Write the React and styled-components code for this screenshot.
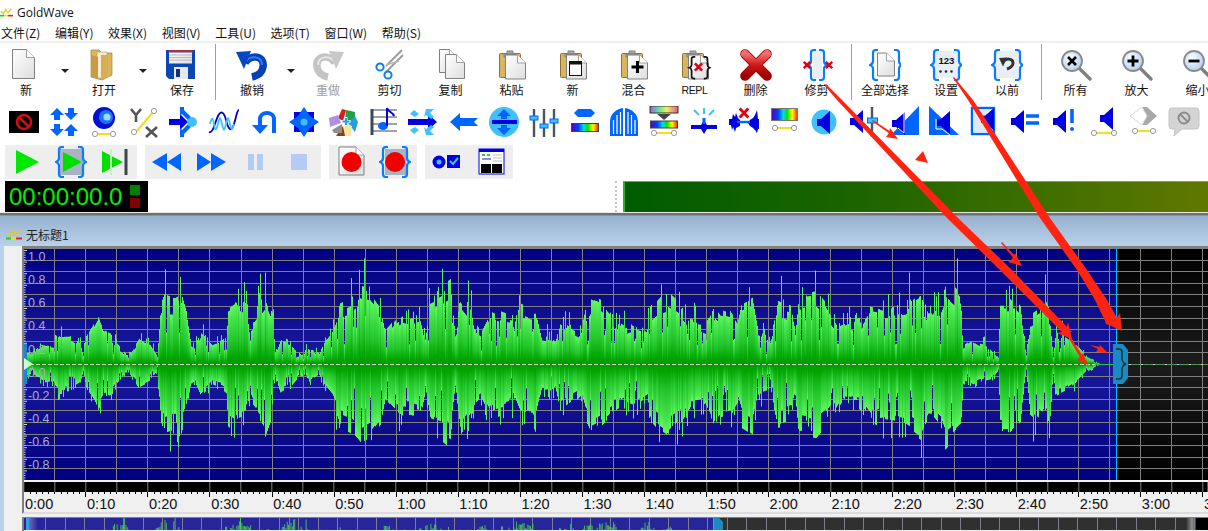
import React from 'react'
import styled, { createGlobalStyle } from 'styled-components'

const GlobalStyle = createGlobalStyle`
  html, body { margin: 0; padding: 0; background: #fff; }
  body { font-family: "Noto Sans CJK SC", "Liberation Sans", sans-serif; }
`

const Page = styled.div`
  position: relative;
  width: 1208px;
  height: 531px;
  overflow: hidden;
  background: #fff;
  display: flex;
  flex-direction: column;
  color: #111;
`
const TitleBar = styled.div`
  height: 24px;
  display: flex;
  align-items: center;
  gap: 4px;
  font: 12px "Open Sans", "Liberation Sans", sans-serif;
`
const MenuBar = styled.div`
  height: 17px;
  display: flex;
  gap: 14.6px;
  padding-left: 1px;
  align-items: center;
  border-bottom: 2px solid #f0f0f0;
  font-size: 12px;
  line-height: 17px;
`
const MainToolbar = styled.div`
  height: 62px;
  display: flex;
  align-items: flex-start;
  padding-top: 1px;
  box-sizing: border-box;
  flex: none;
`
const ToolButton = styled.div`
  width: ${p => p.$w || 61}px;
  margin-right: ${p => p.$mr || 0}px;
  flex: none;
  display: flex;
  flex-direction: column;
  align-items: center;
  padding-top: 5px;
  color: ${p => (p.$off ? '#a0a0a0' : '#111')};
  font-size: 12px;
  line-height: 16px;
  svg { width: 32px; height: 32px; display: block; margin-bottom: 1px; }
`
const SmallLabel = styled.span`
  font: 10.5px/16px "Liberation Sans", sans-serif;
  letter-spacing: -0.3px;
`
const DropArrow = styled.div`
  width: 26px;
  flex: none;
  display: flex;
  justify-content: center;
  padding-top: 25px;
  &::before {
    content: '';
    border: 4px solid transparent;
    border-top: 4px solid #222;
  }
`
const Divider = styled.div`
  width: ${p => p.$w}px;
  flex: none;
  height: 56px;
  box-sizing: border-box;
  padding-left: ${p => p.$at}px;
  &::before {
    content: '';
    display: block;
    width: 1px;
    height: 56px;
    background: #a0a0a0;
  }
`
const IconRow = styled.div`
  height: 40px;
  flex: none;
  display: flex;
  padding-left: 4px;
  align-items: flex-start;
  padding-top: 1px;
  box-sizing: border-box;
`
const IconSlot = styled.div`
  width: 40px;
  flex: none;
  display: flex;
  justify-content: center;
  svg { width: 32px; height: 32px; display: block; }
`
const TransportRow = styled.div`
  height: 34px;
  margin-bottom: 2px;
  flex: none;
  display: flex;
  gap: 8px;
  padding-left: 5px;
`
const TransportGroup = styled.div`
  display: flex;
  background: #eeeeee;
`
const TransportSlot = styled.div`
  width: 44px;
  display: flex;
  align-items: center;
  justify-content: center;
  svg { width: 32px; height: 32px; display: block; }
`
const StatusRow = styled.div`
  height: 31px;
  flex: none;
  display: flex;
  padding-left: 5px;
`
const TimerBox = styled.div`
  width: 143px;
  height: 31px;
  background: #000;
  display: flex;
  align-items: center;
  box-sizing: border-box;
  padding-left: 4px;
  gap: 6px;
`
const TimerText = styled.span`
  font: 24px/31px "Liberation Sans", sans-serif;
  color: #00f000;
  width: 115px;
`
const Leds = styled.div`
  display: flex;
  flex-direction: column;
  gap: 3px;
`
const Led = styled.div`
  width: 10px;
  height: 10px;
  background: ${p => p.$c};
`
const Grip = styled.div`
  margin-left: auto;
  width: 2px;
  margin-right: 4px;
  border-left: 2px dotted #c4c4c4;
`
const Meter = styled.div`
  width: 585px;
  box-sizing: border-box;
  border-top: 1px solid #909090;
  border-left: 2px solid #30b030;
  background: linear-gradient(90deg, #005c00, #1c6400 40%, #607800);
`
const WindowRule = styled.div`
  height: 4px;
  flex: none;
  background: linear-gradient(#e8e8e8 0 1px, #707070 1px 3px, #909090 3px);
`
const DocTitle = styled.div`
  height: 30px;
  flex: none;
  display: flex;
  align-items: center;
  gap: 4px;
  padding: 6px 0 0 6px;
  box-sizing: border-box;
  background: linear-gradient(#97b1ce, #b9d1ea);
  font-size: 12px;
  color: #222;
`
const Workspace = styled.div`
  flex: 1;
  display: flex;
  min-height: 0;
`
const BlueEdge = styled.div`
  width: 4px;
  flex: none;
  background: #b9d1ea;
`
const ClientArea = styled.div`
  flex: 1;
  background: #f0f0f0;
  padding-left: 18px;
  min-width: 0;
  display: flex;
  flex-direction: column;
`
const DocPane = styled.div`
  flex: none;
  height: 268px;
  box-sizing: border-box;
  border-left: 2px solid #808080;
  border-top: 2px solid #808080;
  border-bottom: 2px solid #dcdcdc;
  display: flex;
  flex-direction: column;
`
const WaveCanvas = styled.div`
  position: relative;
  height: 232px;
  flex: none;
  svg { display: block; }
`
const AxisLabels = styled.div`
  position: absolute;
  left: 4px;
  top: -2px;
  display: flex;
  flex-direction: column;
  font: 12.5px/23.15px "Liberation Sans", sans-serif;
  color: #a9a9c6;
`
const RulerEdge = styled.div`
  height: 2px;
  flex: none;
  background: #f4f4f4;
`
const RulerBand = styled.div`
  height: 10px;
  flex: none;
  background: repeating-linear-gradient(90deg, #808080 0 1px, #000 1px 31.03px);
  background-position: -0.7px 0;
`
const RulerTicks = styled.div`
  height: 5px;
  flex: none;
  background-image:
    repeating-linear-gradient(90deg, #000 0 1px, transparent 1px 62.05px),
    repeating-linear-gradient(90deg, #000 0 1px, transparent 1px 6.205px);
  background-size: 100% 5px, 100% 2px;
  background-repeat: no-repeat;
  background-position: -0.7px 0, -0.7px 0;
`
const RulerLabels = styled.div`
  height: 15px;
  flex: none;
  display: flex;
  font: 14.5px/15px "Liberation Sans", sans-serif;
  color: #111;
`
const RulerLabel = styled.span`
  width: 62.05px;
  flex: none;
  padding-left: 1px;
  box-sizing: border-box;
`
const Overview = styled.div`
  margin-top: 3px;
  flex: 1;
  border-top: 1px solid #808080;
  border-left: 2px solid #808080;
  overflow: hidden;
  svg { display: block; }
`
const Annotations = styled.svg`
  position: absolute;
  left: 0;
  top: 0;
  width: 1208px;
  height: 531px;
  pointer-events: none;
`
const SharedDefs = styled.svg`
  position: absolute;
  width: 0;
  height: 0;
`

/* ---------- small drawing parts ---------- */

const Sheet = ({ x = 6, y = 1, w = 22, h = 29 }) => (
  <g>
    <path d={`M${x} ${y}h${w - 8}l8 8V${y + h}H${x}Z`} fill="url(#sheet)" stroke="#808080" />
    <path d={`M${x + w - 8} ${y}v8h8`} fill="#fff" stroke="#a0a0a0" />
  </g>
)
const Clip = () => (
  <g>
    <rect x="3.5" y="4.5" width="21" height="24" rx="1" fill="#d8b562" stroke="#8f7136" />
    <path d="M8 5h12v3H8zM11 5V2h6v3z" fill="#a9a9a9" stroke="#808080" />
  </g>
)
const Brace = ({ x, flip, stroke = '#0a7cff', w = 2.2 }) => (
  <path
    transform={flip ? `translate(${x * 2} 0) scale(-1 1)` : undefined}
    d={`M${x + 5} 1h-2q-3 0-3 3v8q0 3-3 4q3 1 3 4v8q0 3 3 3h2`}
    fill="none"
    stroke={stroke}
    strokeWidth={w}
  />
)
const Cross = ({ x, y, s = 4, w = 2.4 }) => (
  <path d={`M${x - s} ${y - s}L${x + s} ${y + s}M${x + s} ${y - s}L${x - s} ${y + s}`} stroke="#e00010" strokeWidth={w} />
)
const Lens = ({ children }) => (
  <g>
    <path d="M19 19L30 30" stroke="#808080" strokeWidth="3.4" strokeLinecap="round" />
    <circle cx="12" cy="12" r="10" fill="url(#lens)" stroke="#8a8a8a" strokeWidth="1.8" />
    {children}
  </g>
)
const Speaker = ({ x = 0, y = 0, c = '#0000e0' }) => (
  <path transform={`translate(${x} ${y})`} d="M0 8h4l9-8v23l-9-8H0z" fill={c} />
)
const Handles = ({ x1, x2, y }) => (
  <g>
    <path d={`M${x1} ${y}H${x2}`} stroke="#f0e020" strokeWidth="2" />
    <circle cx={x1} cy={y} r="2.6" fill="#fff" stroke="#999" />
    <circle cx={x2} cy={y} r="2.6" fill="#fff" stroke="#999" />
  </g>
)
const Svg = ({ children }) => <svg viewBox="0 0 32 32">{children}</svg>

/* ---------- main toolbar icons ---------- */

const icons = {
  newDoc: <Svg><Sheet x={2.5} y={0.5} w={22} h={29} /></Svg>,
  open: (
    <Svg>
      <path d="M3 1h8l3 3h10v22L14 31 3 28z" fill="#dcb45c" stroke="#a0813c" strokeWidth=".7" />
      <path d="M9 3h10v20l-6 6H9z" fill="#f4ecd8" stroke="#b59a5a" strokeWidth=".6" />
      <path d="M13 6h6v22l-6 2z" fill="#d8ae52" />
      <path d="M3 6l7 2v22l-7-3z" fill="#c89a42" />
    </Svg>
  ),
  save: (
    <Svg>
      <path d="M0 1h29v29H3l-3-3z" fill="#0a46b4" />
      <rect x="2.5" y="1" width="24" height="2.5" fill="#a8324a" />
      <path d="M3 3.5h23v11H3z" fill="url(#sheet)" />
      <path d="M3 6h23M3 8.5h23M3 11h23" stroke="#b8b8c0" />
      <rect x="8" y="18" width="14" height="12" fill="#e8e8e8" />
      <rect x="10" y="20" width="4" height="8" fill="#123070" />
    </Svg>
  ),
  undo: (
    <Svg>
      <path d="M9 14C14 5 29 6 27 18c-1 6-6 9-11 10" fill="none" stroke="#0440b8" strokeWidth="7.5" />
      <path d="M10 12C15 6 26 7 26 16" fill="none" stroke="#2f7ef0" strokeWidth="2" />
      <path d="M0 3l15-1-7 18z" fill="#0648c4" />
    </Svg>
  ),
  redo: (
    <Svg>
      <g transform="translate(32 0) scale(-1 1)">
        <path d="M9 14C14 5 29 6 27 18c-1 6-6 9-11 10" fill="none" stroke="#c4c4c4" strokeWidth="7.5" />
        <path d="M10 12C15 6 26 7 26 16" fill="none" stroke="#e6e6e6" strokeWidth="2" />
        <path d="M0 3l15-1-7 18z" fill="#c8c8c8" />
      </g>
    </Svg>
  ),
  cut: (
    <Svg>
      <path d="M12 17L28 1M12 23L29 6" stroke="#9a9a9a" strokeWidth="1.8" />
      <path d="M12 16L25 12" stroke="#b8b8b8" strokeWidth="1.4" />
      <circle cx="6" cy="18" r="3.6" fill="none" stroke="#1080e0" strokeWidth="2" />
      <circle cx="14" cy="26" r="3.6" fill="none" stroke="#1080e0" strokeWidth="2" />
    </Svg>
  ),
  copy: <Svg><Sheet x={4.5} y={0.5} w={18} h={23} /><Sheet x={10.5} y={5.5} w={19} h={24} /></Svg>,
  paste: <Svg><Clip /><Sheet x={9.5} y={6} w={20} h={24} /></Svg>,
  pasteNew: (
    <Svg>
      <Clip /><Sheet x={9.5} y={6} w={20} h={24} />
      <rect x="12.5" y="12.5" width="12" height="14" fill="#fff" stroke="#111" />
      <rect x="12.5" y="12.5" width="12" height="3" fill="#111" />
    </Svg>
  ),
  pasteMix: (
    <Svg>
      <Clip /><Sheet x={9.5} y={6} w={20} h={24} />
      <path d="M19.5 12v12M13.5 18h12" stroke="#000" strokeWidth="3" />
    </Svg>
  ),
  pasteRepl: (
    <Svg>
      <Clip /><Sheet x={9.5} y={6} w={20} h={24} />
      <g transform="translate(9 0) scale(.72 .72) translate(-1 10)">
        <Brace x={6} stroke="#111" w={2.4} /><Brace x={28} flip stroke="#111" w={2.4} />
      </g>
      <Cross x={19.5} y={18} s={3.6} w={2.6} />
    </Svg>
  ),
  del: (
    <Svg>
      <path d="M5 5L27 27M27 5L5 27" stroke="#a00000" strokeWidth="9.6" strokeLinecap="round" />
      <path d="M5 5L27 27M27 5L5 27" stroke="url(#redx)" strokeWidth="8" strokeLinecap="round" />
    </Svg>
  ),
  trim: (
    <Svg>
      <rect x="12" y="1" width="9" height="28" fill="#e8eef6" />
      <Brace x={10} /><Brace x={23} flip />
      <Cross x={6} y={16} s={3.2} /><Cross x={28} y={16} s={3.2} />
    </Svg>
  ),
  selectAll: (
    <Svg>
      <Sheet x={8.5} y={4} w={17} h={23} />
      <Brace x={4} /><Brace x={30} flip />
    </Svg>
  ),
  set: (
    <Svg>
      <rect x="4" y="2" width="24" height="27" fill="#e8eef6" />
      <Brace x={4} /><Brace x={29} flip />
      <text x="16.4" y="15" textAnchor="middle" fontFamily="Liberation Sans" fontWeight="700" fontSize="9.6" fill="#111">123</text>
      <path d="M10.500 22.500h.01M16 22.500h.01M21.500 22.500h.01" stroke="#222" strokeWidth="2.600" strokeLinecap="round" />
    </Svg>
  ),
  previous: (
    <Svg>
      <rect x="4" y="2" width="24" height="27" fill="#e8eef6" />
      <Brace x={4} /><Brace x={29} flip />
      <path d="M12 13c3-4 10-4 10 1 0 3-3 5-6 6" fill="none" stroke="#333" strokeWidth="3" />
      <path d="M8 9l8-.5-4 9z" fill="#333" />
    </Svg>
  ),
  zoomAll: <Svg><Lens><path d="M8 8l8 8M16 8l-8 8" stroke="#000" strokeWidth="2.6" /></Lens></Svg>,
  zoomIn: <Svg><Lens><path d="M12 6.500v11M6.500 12h11" stroke="#000" strokeWidth="2.8" /></Lens></Svg>,
  zoomOut: <Svg><Lens><path d="M6.500 12h11" stroke="#000" strokeWidth="2.8" /></Lens></Svg>,
}

const BLUE = '#0066ff'
const DEEP = '#0000e0'
const SKY = '#40c0ff'

/* ---------- second row of effect icons ---------- */

const effects = [
  <Svg key="1"><rect x="1" y="5" width="30" height="22" fill="#000" /><circle cx="16" cy="16" r="7" fill="none" stroke="#d01010" strokeWidth="2.600" /><path d="M11 11l10 10" stroke="#d01010" strokeWidth="2.600" /></Svg>,
  <Svg key="2"><path d="M9 2l7 7h-4v5H6V9H2zM9 30l7-7h-4v-5H6v5H2zM23 14l7-7h-4V2h-6v5h-4zM23 18l7 7h-4v5h-6v-5h-4z" fill={BLUE} /></Svg>,
  <Svg key="3"><circle cx="16" cy="12" r="11" fill="#0010d0" /><circle cx="18" cy="11" r="7" fill="#2070ff" /><circle cx="19" cy="11" r="3.6" fill="#90e0ff" /><Handles x1={7} x2={25} y={28} /></Svg>,
  <Svg key="4"><path d="M3 3l5 6 5-6M8 9v7" fill="none" stroke="#555" strokeWidth="2.600" /><path d="M18 21l11 10M29 21L18 31" stroke="#555" strokeWidth="2.600" /><path d="M8 26L25 6" stroke="#f0e020" strokeWidth="2" /><circle cx="6" cy="26" r="2.600" fill="#fff" stroke="#999" /><circle cx="26" cy="5" r="2.600" fill="#fff" stroke="#999" /></Svg>,
  <Svg key="5"><path d="M1 13h11V8l8 8-8 8v-5H1z" fill={DEEP} /><path d="M12 1h4v3l7 7-3 3-6-6-2 2zM12 31h4v-3l7-7-3-3-6 6-2-2z" fill={BLUE} /><circle cx="24" cy="16" r="5" fill={SKY} /></Svg>,
  <Svg key="6"><path d="M1 26C5 28 7 16 10 10s6-4 8 4 5 14 8 4 3-14 5-14" fill="none" stroke="#0000c0" strokeWidth="1.800" /><path d="M2 18c2-8 3-6 4 0s2 8 4 0 2-8 4 0 2 8 4 0 2-8 4 0 2 6 4 0" fill="none" stroke={SKY} strokeWidth="1.800" /></Svg>,
  <Svg key="7"><path d="M12 26V13c0-8 14-8 14 0v14" fill="none" stroke={BLUE} strokeWidth="4" /><path d="M4 19h16l-8 9z" fill={BLUE} /></Svg>,
  <Svg key="8"><rect x="6" y="6" width="20" height="20" fill={DEEP} /><path d="M16 1l6 9 9 6-9 6-6 9-6-9-9-6 9-6z" fill={BLUE} /><circle cx="16" cy="16" r="3.500" fill={SKY} /></Svg>,
  <Svg key="9"><path d="M14 3l4 1-3 11-5-3z" fill="#e01818" /><path d="M18 4l9 2v8l-10 1z" fill="#20a040" /><path d="M27 10l3 6-3 10-7-9z" fill="#20a0e0" /><path d="M17 17l7 3-1 10-8 0z" fill="#f0e8a0" /><path d="M15 20l2 10H8z" fill="#904010" /><path d="M4 24l10-6 0 9H6z" fill="#909090" /><path d="M1 12l9-3 3 8-11 4z" fill="#b090e0" /><path d="M18 11v9M13.500 15.500h9" stroke="#fff" strokeWidth="3" /><path d="M18 12v7M14.500 15.500h7" stroke="#20a0f0" strokeWidth="2" /></Svg>,
  <Svg key="10"><path d="M4 3v26" stroke="#3c4858" strokeWidth="3" /><path d="M4 4h25M4 11h25M4 18h25M4 25h25" stroke="#3c4858" strokeWidth="1.200" /><ellipse cx="15" cy="20" rx="5" ry="4" fill={BLUE} /><path d="M19 20V2c1 4 6 4 7 8" fill="none" stroke={DEEP} strokeWidth="2" /></Svg>,
  <Svg key="11"><path d="M0 13h20V8l9 8-9 8v-5H0z" fill={DEEP} /><path d="M18 3h8l-4 4 4 4-3 2-5-4-2 2zM18 29h8l-4-4 4-4-3-2-5 4-2-2z" fill={SKY} /><path d="M2 8l4-4 5 4-4 3zM2 24l4 4 5-4-4-3z" fill={SKY} /></Svg>,
  <Svg key="12"><path d="M2 16l10-9v5h18l-4 4 4 4H12v5z" fill={BLUE} /></Svg>,
  <Svg key="13"><circle cx="16" cy="16" r="15" fill={SKY} /><path d="M4 14h25v4H4z" fill={DEEP} /><path d="M16 3l7 7h-4v3h-6v-3H9zM16 29l7-7h-4v-3h-6v3H9z" fill={BLUE} /></Svg>,
  <Svg key="14"><path d="M6 3v28M16 3v28M26 3v28" stroke="#4a5560" strokeWidth="2.400" /><rect x="2" y="10" width="8" height="4" fill={SKY} stroke={BLUE} /><rect x="12" y="18" width="8" height="4" fill={SKY} stroke={BLUE} /><rect x="22" y="13" width="8" height="4" fill={SKY} stroke={BLUE} /></Svg>,
  <Svg key="15"><path d="M10 3h13l4 4-4 4H10L6 7z" fill={BLUE} /><rect x="3.500" y="17.500" width="27" height="8" fill="url(#rainbow)" stroke="#444" /></Svg>,
  <Svg key="16"><path d="M2 30V16C2 8 8 3 15 2v28zM17 2c7 1 13 6 13 14v14H17z" fill={BLUE} /><path d="M5.500 28V14M9 28V9M12.500 28V6M20 28V6M23.500 28V9M27 28V14" stroke="#fff" strokeWidth="1.200" /></Svg>,
  <Svg key="17"><rect x="2" y="0" width="28" height="7" fill="url(#noise)" stroke="#333" /><path d="M9 8h14l-7 6z" fill="#444" /><rect x="2.500" y="15" width="27" height="7" fill="url(#rainbow)" stroke="#444" /><Handles x1={6} x2={26} y={27} /></Svg>,
  <Svg key="18"><path d="M3 19h10l3-5 3 5h10v4H19l-3 5-3-5H3z" fill={DEEP} /><path d="M16 12V18" stroke={BLUE} strokeWidth="3" /><path d="M16 2v6M6 4l5 5M26 4l-5 5" stroke={SKY} strokeWidth="2" /></Svg>,
  <Svg key="19"><path d="M1 13h3l1-5 2 3 1-4 2 5 2 2 0 6-4 2-1 4-2-5-1 3-1-5-2 0z" fill={DEEP} /><path d="M31 13h-1l-1-9-2 5-2 3-3 2-2 3 2 3 3 2 2 2 2 3 1-4h1z" fill={DEEP} /><path d="M9 16h13" stroke={BLUE} strokeWidth="2.400" /><Cross x={16} y={7} s={4.400} w={2.800} /></Svg>,
  <Svg key="20"><rect x="3.500" y="2.500" width="26" height="12" fill="url(#rainbow)" stroke="#777" /><Handles x1={7} x2={26} y={22} /></Svg>,
  <Svg key="21"><circle cx="16" cy="16" r="12.500" fill={SKY} /><Speaker x={9} y={5} /></Svg>,
  <Svg key="22"><Speaker x={2} y={4} /><path d="M24 1v30" stroke="#4a5560" strokeWidth="2.400" /><rect x="19.500" y="12" width="10" height="5" fill={SKY} stroke={BLUE} /></Svg>,
  <Svg key="23"><path d="M3 29H31V0z" fill={BLUE} /><Speaker x={4} y={6} /><path d="M16 6v21l-6-5" fill="none" stroke="#fff" /></Svg>,
  <Svg key="24"><path d="M1 29h30L1 0z" fill={BLUE} /><Speaker x={9} y={5} /><path d="M8 13v10h6l8 6" fill="none" stroke="#fff" /></Svg>,
  <Svg key="25"><rect x="4" y="2" width="22" height="26" fill="none" stroke={BLUE} strokeWidth="2.400" /><rect x="5" y="4" width="14" height="22" fill="#dfe9f6" /><path transform="translate(13 2) scale(1 .98)" d="M0 8h4l9-8v23l-9-8H0z" fill={DEEP} /></Svg>,
  <Svg key="26"><Speaker x={3} y={4} /><path d="M18 10h13M18 17h13" stroke={BLUE} strokeWidth="3.400" /></Svg>,
  <Svg key="27"><Speaker x={5} y={4} /><path d="M24 3v14" stroke={BLUE} strokeWidth="3.600" /><circle cx="24" cy="23" r="2" fill={BLUE} /></Svg>,
  <Svg key="28"><Speaker x={12} y={1} /><Handles x1={6} x2={26} y={27} /></Svg>,
  <Svg key="29"><path d="M14 1h5l10 9-10 9h-5l5-9z" fill="#a8a8a8" /><path d="M2 10l12-9 5 9-5 9z" fill="#fff" stroke="#d8d8d8" /><Handles x1={7} x2={25} y={25} /></Svg>,
  <Svg key="30"><path d="M4 2h24q3 0 3 3v15q0 3-3 3H14l-8 7 1-7H4q-3 0-3-3V5q0-3 3-3z" fill="#d4d4d4" stroke="#c4c4c4" /><rect x="4" y="5" width="24" height="15" rx="2" fill="#d4d4d4" /><circle cx="16" cy="12" r="5.500" fill="none" stroke="#8c8c8c" strokeWidth="2" /><path d="M12.500 8.500l7 7" stroke="#8c8c8c" strokeWidth="2" /></Svg>,
]

/* ---------- transport icons ---------- */

const transport = [
  [
    <Svg key="a"><path d="M5 4l23 12-23 12z" fill="#00e800" /></Svg>,
    <Svg key="b"><rect x="5" y="3" width="23" height="26" fill="#a8b4c4" /><Brace x={4} /><Brace x={28} flip /><path d="M8 6l19 10-19 10z" fill="#00e000" /></Svg>,
    <Svg key="c"><path d="M3 5l21 11-21 11z" fill="#00e000" /><path d="M12 3v26" stroke="#c8f0c8" strokeWidth="2" /><path d="M27 3v26" stroke="#3c4450" strokeWidth="3" /></Svg>,
  ],
  [
    <Svg key="d"><path d="M1 16l15-9v18zM16 16l14-9v18z" fill={BLUE} /></Svg>,
    <Svg key="e"><path d="M31 16l-15-9v18zM16 16L2 7v18z" fill={BLUE} /></Svg>,
    <Svg key="f"><path d="M9 8h6v16H9zM18 8h6v16h-6z" fill="#b4ccf4" /></Svg>,
    <Svg key="g"><rect x="8" y="8" width="16" height="16" fill="#b4ccf4" /></Svg>,
  ],
  [
    <Svg key="h"><Sheet x={4} y={1} w={25} h={28} /><circle cx="16.500" cy="16" r="10" fill="#f00000" /></Svg>,
    <Svg key="i"><rect x="6" y="3" width="21" height="26" fill="#a8b4c4" /><Brace x={4} /><Brace x={28} flip /><circle cx="16" cy="16" r="10" fill="#f00000" /></Svg>,
  ],
  [
    <Svg key="j"><circle cx="8" cy="16" r="6.500" fill={DEEP} /><circle cx="8" cy="16" r="2.500" fill={SKY} /><rect x="16" y="9" width="13" height="13" fill={DEEP} /><path d="M19 15l3 3 5-6" fill="none" stroke={SKY} strokeWidth="2" /></Svg>,
    <Svg key="k"><rect x="4" y="3" width="25" height="25" fill="#fff" stroke={DEEP} /><rect x="4" y="3" width="25" height="3" fill={DEEP} /><path d="M7 9h3M12 9h3" stroke="#40c040" strokeWidth="2" /><path d="M18 9h9M18 12h9M18 15h9" stroke="#c0c0c0" /><path d="M7 13h9" stroke="#2020c0" /><rect x="6" y="18" width="10" height="9" fill="#000" /><rect x="17" y="18" width="10" height="9" fill="#000" /></Svg>,
  ],
]

/* ---------- waveform data, read off the reference ---------- */

const envelope = [
  [24, 14], [27, 10], [33, 11], [42, 17], [53, 15], [55, 21], [60, 26], [70, 26], [80, 19], [83, 7], [86, 25], [92, 33], [97, 42],
  [103, 31], [110, 28], [117, 18], [125, 10], [130, 10], [133, 14], [140, 23], [150, 18], [157, 7], [160, 50], [165, 62], [170, 60],
  [175, 60], [180, 63], [186, 45], [190, 22], [195, 18], [200, 29], [205, 25], [212, 18], [222, 22], [226, 25], [228, 55], [235, 60],
  [245, 55], [250, 20], [253, 45], [265, 62], [272, 45], [275, 10], [280, 25], [290, 20], [300, 10], [310, 15], [318, 10], [325, 25],
  [332, 35], [340, 55], [350, 60], [360, 70], [370, 65], [380, 52], [385, 30], [395, 40], [403, 45], [410, 43], [420, 47], [425, 25],
  [430, 60], [440, 65], [450, 72], [455, 25], [460, 65], [470, 50], [474, 35], [480, 30], [490, 50], [500, 45], [515, 40], [520, 55],
  [530, 50], [535, 50], [541, 25], [550, 23], [555, 20], [560, 42], [570, 35], [578, 30], [580, 28], [585, 50], [590, 60], [600, 55],
  [610, 45], [625, 35], [632, 38], [640, 35], [647, 30], [650, 50], [660, 60], [668, 65], [680, 55], [690, 40], [700, 38], [705, 35],
  [715, 55], [720, 48], [730, 45], [737, 35], [742, 55], [752, 60], [758, 30], [770, 25], [778, 55], [790, 50], [795, 30], [798, 62],
  [815, 65], [825, 55], [838, 35], [850, 40], [855, 38], [860, 40], [870, 55], [885, 52], [905, 55], [915, 62], [920, 65], [928, 50],
  [932, 50], [940, 60], [945, 75], [960, 60], [963, 17], [972, 22], [978, 18], [990, 15], [998, 6], [1000, 60], [1010, 60], [1020, 50],
  [1026, 6], [1030, 45], [1045, 55], [1050, 45], [1053, 8], [1055, 30], [1065, 25], [1075, 18], [1085, 8], [1095, 3], [1100, 0],
]

const ampAt = x => {
  for (let i = 1; i < envelope.length; i++) {
    const [x0, a0] = envelope[i - 1]
    const [x1, a1] = envelope[i]
    if (x <= x1) return a0 + ((a1 - a0) * (x - x0)) / (x1 - x0 || 1)
  }
  return 0
}

let seed = 12345
const rand = () => {
  seed = (seed * 1664525 + 1013904223) % 4294967296
  return seed / 4294967296
}

// blocks of 2-5px with an own height, plus thin 1px spikes and dips
const blockNoise = () => {
  let left = 0
  let level = 1
  return () => {
    if (left <= 0) {
      left = 2 + Math.floor(rand() * 4)
      level = 0.82 + rand() * 0.36
    }
    left--
    const r = rand()
    if (r > 0.87) return level * (1.15 + rand() * 0.32)
    if (r < 0.1) return level * (0.4 + rand() * 0.3)
    return level
  }
}

const noiseUp = blockNoise()
const noiseDown = blockNoise()
const columns = []
for (let x = 24; x < 1100; x++) {
  const a = ampAt(x)
  const up = a * noiseUp()
  const down = a * noiseDown()
  columns.push({ x, up: Math.max(up, 0.5), down: Math.max(down, 0.5) })
}

const CENTER = 364
const STEP_X = 31.03
const gridXs = Array.from({ length: 39 }, (_, i) => 23.3 + STEP_X * i)
const gridYs = Array.from({ length: 21 }, (_, i) => CENTER - 116 + 11.6 * i)
const axisLabels = ['1.0', '0.8', '0.6', '0.4', '0.2', '0.0', '-0.2', '-0.4', '-0.6', '-0.8']
const menuItems = ['文件(Z)', '编辑(Y)', '效果(X)', '视图(V)', '工具(U)', '选项(T)', '窗口(W)', '帮助(S)']
const rulerTimes = ['0:00', '0:10', '0:20', '0:30', '0:40', '0:50', '1:00', '1:10', '1:20', '1:30', '1:40', '1:50', '2:00', '2:10', '2:20', '2:30', '2:40', '2:50', '3:00', '3:10']

const WaveChart = () => (
  <svg width="1184" height="232" viewBox="24 248 1184 232">
    <rect x="24" y="248" width="1093" height="232" fill="url(#bluebg)" />
    <rect x="1117" y="248" width="91" height="232" fill="url(#blackbg)" />
    {gridXs.map(x => <path key={x} d={`M${Math.round(x) + 0.5} 248V480`} stroke="#808080" />)}
    {gridYs.map(y => <path key={y} d={`M24 ${Math.round(y) + 0.5}H1208`} stroke="#808080" />)}
    {Array.from({ length: 100 }, (_, i) => (
      <path key={i} d={`M24 ${250.5 + i * 2.32}h${i % 5 ? 1.5 : 3}`} stroke="#d8d8d8" />
    ))}
    {columns.map(c => (
      <g key={c.x}>
        <rect x={c.x} y={CENTER - c.up} width="1" height={c.up} fill="url(#waveUp)" />
        <rect x={c.x} y={CENTER} width="1" height={c.down} fill="url(#waveDown)" />
      </g>
    ))}
    <path d="M1095 364.500H1117" stroke="#30c040" />
    <path d="M24 364.500H1095" stroke="#dcd0d0" strokeDasharray="4 2" />
    <path d="M1117 364.500H1208" stroke="#30a040" strokeDasharray="4 2" />
    <path d="M1117 364.500H1208" stroke="#c8c8c8" strokeDasharray="2 10" />
    <rect x="24" y="344" width="3" height="40" fill="#1a86d0" />
    <path d="M24 358l9 6-9 6z" fill="#c8ffd0" />
    <path d="M1116.500 248V480" stroke="#00c0f8" />
    <path d="M1113 344h10l5 6v28l-5 6h-10z" fill="#1a8ac0" />
    <path d="M1116 349h3q3 0 3 3v6q0 5 4 6q-4 1-4 6v6q0 3-3 3h-3" fill="none" stroke="#12323c" strokeWidth="1.400" />
  </svg>
)

const OverviewChart = () => (
  <svg width="1186" height="12" viewBox="22 519 1186 12">
    <rect x="22" y="519" width="690" height="12" fill="#26269a" />
    <rect x="24" y="519" width="12" height="12" fill="url(#fade)" />
    <rect x="24" y="519" width="3" height="12" fill="#30a0e0" />
    <rect x="712" y="519" width="480" height="12" fill="#303030" />
    <rect x="1184" y="519" width="10" height="12" fill="url(#fadeGray)" />
    <rect x="1194" y="519" width="14" height="12" fill="#000" />
    {Array.from({ length: 60 }, (_, i) => (
      <path key={i} d={`M${Math.round(43.3 + 19.47 * i) + 0.5} 519V531`} stroke="#7c7c8c" />
    ))}
    {columns.filter(c => c.x % 2 === 0).map(c => {
      const ox = 24 + (c.x - 24) * 0.63
      const top = 548 - c.up * 0.33
      return top < 531 ? <rect key={c.x} x={ox} y={top} width=".8" height={531 - top} fill="#44dd44" /> : null
    })}
    <path d="M712 519h5q2 2 4 4v8h-9z" fill="#1a8ac0" />
    <path d="M711.500 519V531" stroke="#00c0f8" />
  </svg>
)

const Logo = ({ w = 16, h = 12 }) => (
  <svg width={w} height={h} viewBox="0 0 16 12">
    <path d="M1 5l3 3 3-5 3 4 4-5" fill="none" stroke="#e8c820" strokeWidth="1.600" />
    <path d="M0 10.500h5" stroke="#10d020" strokeWidth="2" />
    <path d="M5 10.500h5" stroke="#f0e020" strokeWidth="2" />
    <path d="M10 10.500h6" stroke="#e82020" strokeWidth="2" />
  </svg>
)

const Tool = ({ icon, label, ...rest }) => (
  <ToolButton {...rest}>
    {icons[icon]}
    <span>{label}</span>
  </ToolButton>
)

export default function App() {
  return (
    <Page>
      <GlobalStyle />
      <SharedDefs aria-hidden="true">
        <defs>
          <linearGradient id="sheet" x1="0" y1="0" x2="1" y2="1">
            <stop offset="0" stopColor="#ffffff" /><stop offset="1" stopColor="#dedede" />
          </linearGradient>
          <radialGradient id="lens" cx=".4" cy=".35" r=".75">
            <stop offset="0" stopColor="#ffffff" /><stop offset="1" stopColor="#a8c8f0" />
          </radialGradient>
          <linearGradient id="redx" x1="0" y1="0" x2="0" y2="1">
            <stop offset="0" stopColor="#f07070" /><stop offset=".5" stopColor="#d01818" /><stop offset="1" stopColor="#a00000" />
          </linearGradient>
          <linearGradient id="rainbow">
            <stop offset="0" stopColor="#6000b0" /><stop offset=".25" stopColor="#0040ff" /><stop offset=".45" stopColor="#00d8ff" />
            <stop offset=".6" stopColor="#00e000" /><stop offset=".8" stopColor="#ffff00" /><stop offset="1" stopColor="#ff2000" />
          </linearGradient>
          <linearGradient id="noise">
            <stop offset="0" stopColor="#a060e0" /><stop offset=".3" stopColor="#60e0a0" /><stop offset=".6" stopColor="#f0f060" /><stop offset="1" stopColor="#e06080" />
          </linearGradient>
          <linearGradient id="waveUp" x1="0" y1="1" x2="0" y2="0">
            <stop offset="0" stopColor="#009c00" /><stop offset=".1" stopColor="#00a400" /><stop offset=".4" stopColor="#24c62c" /><stop offset=".8" stopColor="#48e44e" /><stop offset="1" stopColor="#62f862" />
          </linearGradient>
          <linearGradient id="waveDown" x1="0" y1="0" x2="0" y2="1">
            <stop offset="0" stopColor="#009c00" /><stop offset=".1" stopColor="#00a400" /><stop offset=".4" stopColor="#24c62c" /><stop offset=".8" stopColor="#48e44e" /><stop offset="1" stopColor="#62f862" />
          </linearGradient>
          <linearGradient id="bluebg" x1="0" y1="0" x2="0" y2="1">
            <stop offset="0" stopColor="#000080" /><stop offset=".5" stopColor="#1a1a9c" /><stop offset="1" stopColor="#000080" />
          </linearGradient>
          <linearGradient id="blackbg" x1="0" y1="0" x2="0" y2="1">
            <stop offset="0" stopColor="#000" /><stop offset=".5" stopColor="#1c1c1c" /><stop offset="1" stopColor="#000" />
          </linearGradient>
          <linearGradient id="fade">
            <stop offset="0" stopColor="#8080d0" /><stop offset="1" stopColor="#26269a" />
          </linearGradient>
          <linearGradient id="fadeGray">
            <stop offset="0" stopColor="#303030" /><stop offset=".6" stopColor="#909090" /><stop offset="1" stopColor="#404040" />
          </linearGradient>
        </defs>
      </SharedDefs>

      <TitleBar>
        <Logo w={13} h={12} />
        <span>GoldWave</span>
      </TitleBar>
      <MenuBar>
        {menuItems.map(m => <span key={m}>{m}</span>)}
      </MenuBar>

      <MainToolbar>
        <Tool icon="newDoc" label="新" $w={52} />
        <DropArrow />
        <Tool icon="open" label="打开" $w={52} />
        <DropArrow />
        <Tool icon="save" label="保存" $w={52} />
        <Divider $w={18} $at={7} />
        <Tool icon="undo" label="撤销" $w={52} />
        <DropArrow />
        <Tool icon="redo" label="重做" $w={48} $mr={7} $off />
        <Tool icon="cut" label="剪切" />
        <Tool icon="copy" label="复制" />
        <Tool icon="paste" label="粘贴" />
        <Tool icon="pasteNew" label="新" />
        <Tool icon="pasteMix" label="混合" />
        <ToolButton>
          {icons.pasteRepl}
          <SmallLabel>REPL</SmallLabel>
        </ToolButton>
        <Tool icon="del" label="删除" />
        <Tool icon="trim" label="修剪" />
        <Divider $w={7.500} $at={3.500} />
        <Tool icon="selectAll" label="全部选择" />
        <Tool icon="set" label="设置" />
        <Tool icon="previous" label="以前" />
        <Divider $w={7.500} $at={3} />
        <Tool icon="zoomAll" label="所有" />
        <Tool icon="zoomIn" label="放大" />
        <Tool icon="zoomOut" label="缩小" />
      </MainToolbar>

      <IconRow>
        {effects.map((icon, i) => <IconSlot key={i}>{icon}</IconSlot>)}
      </IconRow>

      <TransportRow>
        {transport.map((group, i) => (
          <TransportGroup key={i}>
            {group.map((icon, j) => <TransportSlot key={j}>{icon}</TransportSlot>)}
          </TransportGroup>
        ))}
      </TransportRow>

      <StatusRow>
        <TimerBox>
          <TimerText>00:00:00.0</TimerText>
          <Leds>
            <Led $c="#008000" />
            <Led $c="#800000" />
          </Leds>
        </TimerBox>
        <Grip />
        <Meter />
      </StatusRow>

      <WindowRule />
      <DocTitle>
        <Logo />
        <span>无标题1</span>
      </DocTitle>

      <Workspace>
        <BlueEdge />
        <ClientArea>
          <DocPane>
            <WaveCanvas>
              <WaveChart />
              <AxisLabels>
                {axisLabels.map(l => <span key={l}>{l}</span>)}
              </AxisLabels>
            </WaveCanvas>
            <RulerEdge />
            <RulerBand />
            <RulerTicks />
            <RulerLabels>
              {rulerTimes.map(t => <RulerLabel key={t}>{t}</RulerLabel>)}
            </RulerLabels>
          </DocPane>
          <Overview>
            <OverviewChart />
          </Overview>
        </ClientArea>
      </Workspace>

      <Annotations viewBox="0 0 1208 531">
        <g fill="#ff2412">
          <path d="M826 84L842 100 958 218 1012 270 1072 332 1062 332 1000 270 947 218 837 100 825 86z" />
          <path d="M1072 339l-4-17-2 9-9 2z" />
          <path d="M1070 336l14 22-3 1-13-22z" />
          <path d="M1088 365l-11-5 6-7z" />
          <path d="M954 77L973 100 1050 218 1087 270 1107 300 1117 318 1107 325 1095 300 1077 270 1040 218 968 100 953 78z" />
          <path d="M1122 331l-2-18-5 7-10 3z" />
          <path d="M873 120l18 12-1 2-18-13z" />
          <path d="M898 139l-12-2 3-4 1-5z" />
          <path d="M923 151l-8 9 13 3z" />
          <path d="M1002 242l15 16-2 2-14-17z" />
          <path d="M1022 266l-14-4 4-3 3-6z" />
          <path d="M1090 345l10 2-1-3 9 9-12-1 2-3z" />
        </g>
      </Annotations>
    </Page>
  )
}
